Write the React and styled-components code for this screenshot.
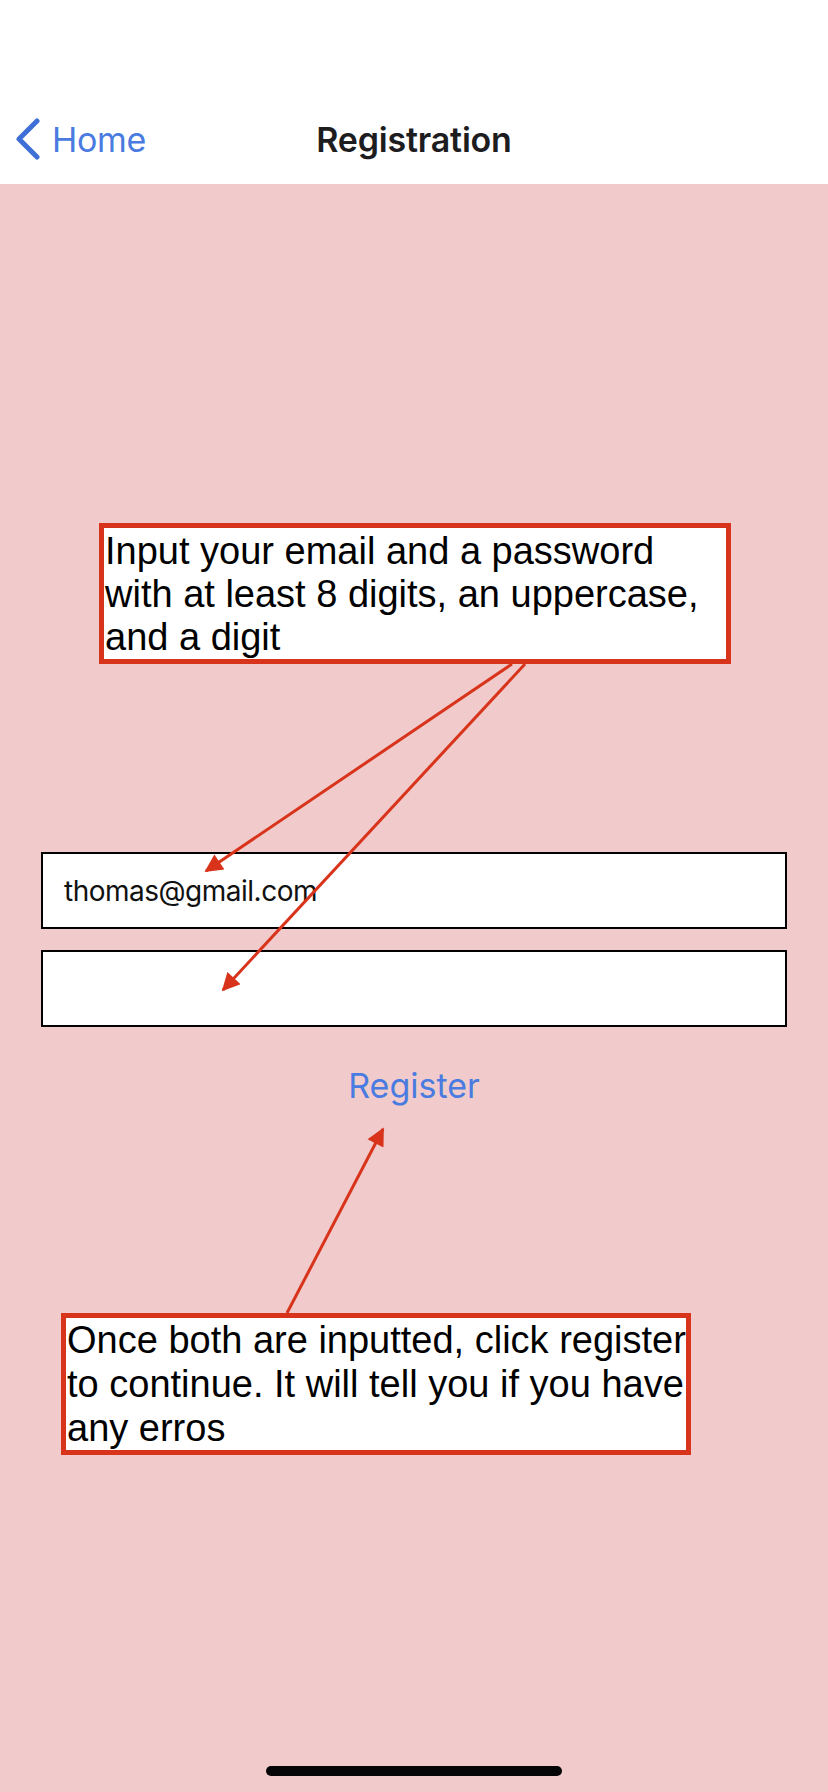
import React from "react";
import styled, { createGlobalStyle } from "styled-components";

const GlobalStyle = createGlobalStyle`
  html, body {
    margin: 0;
    padding: 0;
    background: #f1cbcb;
  }
  * { box-sizing: border-box; }
`;

const Screen = styled.div`
  position: relative;
  width: 828px;
  min-height: 1792px;
  background: #f1cbcb;
  display: flex;
  flex-direction: column;
  font-family: Inter, "Noto Sans", sans-serif;
`;

const Header = styled.header`
  background: #ffffff;
  height: 184px;
  padding-top: 88px;
`;

const NavBar = styled.nav`
  height: 96px;
  display: grid;
  grid-template-columns: 1fr auto 1fr;
  align-items: center;
  padding-top: 6px;
`;

const BackButton = styled.button`
  justify-self: start;
  display: flex;
  align-items: center;
  gap: 11px;
  border: 0;
  background: none;
  padding: 0 0 0 15px;
  color: #4a7be0;
  font-family: Inter, "Noto Sans", sans-serif;
  font-size: 34px;
  letter-spacing: -0.3px;
  cursor: pointer;
`;

const Title = styled.h1`
  margin: 0;
  font-size: 34px;
  font-weight: 600;
  color: #1d1d1f;
  letter-spacing: -0.2px;
`;

const Content = styled.main`
  flex: 1;
  display: flex;
  flex-direction: column;
  padding-top: 339px;
`;

const Callout = styled.div`
  margin-left: ${(p) => p.$left}px;
  width: ${(p) => p.$width}px;
  border: 5px solid #d8331b;
  background: #ffffff;
  padding: ${(p) => p.$padTop}px 2px 0 1px;
  font-family: "Liberation Sans", Arial, sans-serif;
  font-size: 38px;
  line-height: ${(p) => p.$lh}px;
  color: #000000;
  white-space: nowrap;
`;

const Form = styled.div`
  display: flex;
  flex-direction: column;
  gap: 21px;
  margin: ${(p) => p.$top}px 41px 0 41px;
`;

const Field = styled.div`
  height: 77px;
  border: 2px solid #000000;
  background: #ffffff;
  display: flex;
  align-items: center;
  padding-left: 21px;
  font-size: 28px;
  color: #111111;
  letter-spacing: -0.5px;
`;

const RegisterButton = styled.button`
  align-self: center;
  margin-top: 39px;
  border: 0;
  background: none;
  padding: 0;
  color: #4a7be0;
  font-family: Inter, "Noto Sans", sans-serif;
  font-size: 34px;
  line-height: 40px;
  cursor: pointer;
`;

const Spacer = styled.div`
  height: ${(p) => p.$h}px;
`;

const HomeIndicator = styled.div`
  position: absolute;
  left: 266px;
  top: 1766px;
  width: 296px;
  height: 10px;
  border-radius: 5px;
  background: #050507;
`;

const Overlay = styled.svg`
  position: absolute;
  left: 0;
  top: 0;
  width: 828px;
  height: 1792px;
  pointer-events: none;
`;

const Chevron = () => (
  <svg width="26" height="42" viewBox="0 0 26 42" aria-hidden="true">
    <path
      d="M22 3 L4 21 L22 39"
      fill="none"
      stroke="#3d6fd6"
      strokeWidth="5"
      strokeLinecap="round"
      strokeLinejoin="round"
    />
  </svg>
);

const arrows = [
  { x1: 512, y1: 664, x2: 206, y2: 871 },
  { x1: 525, y1: 664, x2: 223, y2: 990 },
  { x1: 287, y1: 1313, x2: 383, y2: 1129 },
];

export default function App() {
  return (
    <>
      <GlobalStyle />
      <Screen>
        <Header>
          <NavBar>
            <BackButton>
              <Chevron />
              Home
            </BackButton>
            <Title>Registration</Title>
            <div />
          </NavBar>
        </Header>
        <Content>
          <Callout $left={99} $width={632} $lh={43} $padTop={2}>
            Input your email and a password
            <br />
            with at least 8 digits, an uppercase,
            <br />
            and a digit
          </Callout>
          <Form $top={188}>
            <Field>thomas@gmail.com</Field>
            <Field />
          </Form>
          <RegisterButton>Register</RegisterButton>
          <Spacer $h={207} />
          <Callout $left={61} $width={630} $lh={44} $padTop={0}>
            Once both are inputted, click register
            <br />
            to continue. It will tell you if you have
            <br />
            any erros
          </Callout>
        </Content>
        <Overlay viewBox="0 0 828 1792">
          <defs>
            <marker
              id="head"
              viewBox="0 0 10 10"
              refX="9"
              refY="5"
              markerWidth="7"
              markerHeight="6"
              orient="auto"
              markerUnits="strokeWidth"
            >
              <path d="M0 0 L10 5 L0 10 Z" fill="#d8331b" />
            </marker>
          </defs>
          {arrows.map((a, i) => (
            <line
              key={i}
              x1={a.x1}
              y1={a.y1}
              x2={a.x2}
              y2={a.y2}
              stroke="#d8331b"
              strokeWidth="3"
              markerEnd="url(#head)"
            />
          ))}
        </Overlay>
        <HomeIndicator />
      </Screen>
    </>
  );
}
